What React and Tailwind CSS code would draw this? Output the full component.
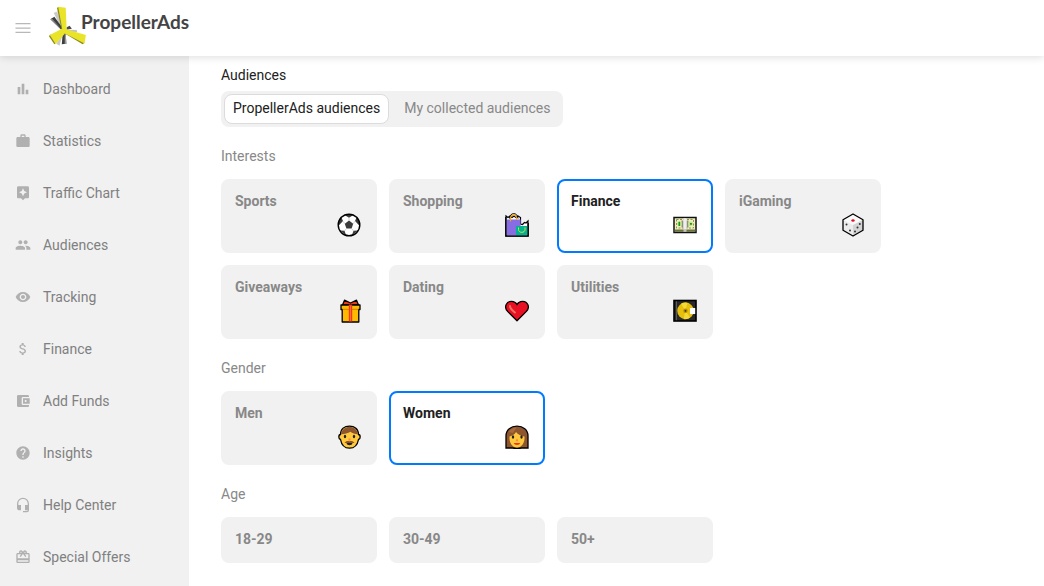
import { useState } from 'react';
import {
  MdBarChart, MdWork, MdAssistant, MdPeople, MdVisibility, MdAttachMoney,
  MdAccountBalanceWallet, MdHelp, MdHeadsetMic, MdCardGiftcard,
} from 'react-icons/md';

const NAV = [
  { label: 'Dashboard', icon: MdBarChart },
  { label: 'Statistics', icon: MdWork },
  { label: 'Traffic Chart', icon: MdAssistant },
  { label: 'Audiences', icon: MdPeople },
  { label: 'Tracking', icon: MdVisibility },
  { label: 'Finance', icon: MdAttachMoney },
  { label: 'Add Funds', icon: MdAccountBalanceWallet },
  { label: 'Insights', icon: MdHelp },
  { label: 'Help Center', icon: MdHeadsetMic },
  { label: 'Special Offers', icon: MdCardGiftcard },
];

const TABS = ['PropellerAds audiences', 'My collected audiences'];

const INTERESTS = [
  { label: 'Sports', icon: BallIcon },
  { label: 'Shopping', icon: BagsIcon },
  { label: 'Finance', icon: MoneyIcon },
  { label: 'iGaming', icon: DiceIcon },
  { label: 'Giveaways', icon: GiftIcon },
  { label: 'Dating', icon: HeartIcon },
  { label: 'Utilities', icon: DiscIcon },
];

const GENDERS = [
  { label: 'Men', icon: ManIcon },
  { label: 'Women', icon: WomanIcon },
];

const AGES = [{ label: '18-29' }, { label: '30-49' }, { label: '50+' }];

// ─── Icons ───────────────────────────────────────────────────────────────────

function Glyph({ children }) {
  return (
    <svg viewBox="0 0 24 24" className="m-0.5 size-6 self-end" aria-hidden="true">{children}</svg>
  );
}

function BallIcon() {
  return (
    <Glyph>
      <circle cx="12" cy="12" r="10.8" fill="#fff" />
      <path fill="#3b3b3b" d="M12 7.600 16.200 10.700 14.600 15.600H9.400L7.800 10.700Z" />
      <path fill="#3b3b3b" d="M7.200 1.700h9.600L12 4.800ZM1.200 9.200 4 3.500 6 8 1.300 13ZM22.800 9.200 20 3.500 18 8l4.700 5ZM2.800 17.600 7.500 17.800 9.200 22.600ZM21.200 17.600 16.500 17.800 14.800 22.600Z" />
      <path fill="none" stroke="#b5b5b5" strokeWidth=".6" d="M12 4.400v3.400M5.600 8 8 10.800M18.400 8 16 10.800M7.300 18.200l2.200-2.800M16.700 18.200l-2.200-2.800" />
      <circle cx="12" cy="12" r="10.8" fill="none" stroke="#000" strokeWidth="1.400" />
    </Glyph>
  );
}

function BagsIcon() {
  return (
    <Glyph>
      <path fill="#fff" stroke="#000" strokeWidth="1.200" d="M1 23V3l2 1.500L5 3l2 1.500L9 3l2 1.500L13 3l2.500 1.500V11l2 .5 2-2 1.500.500L23 8v15Z" />
      <path fill="#886ce4" d="M1.600 6.500h14V22.400h-14Z" />
      <path fill="#00b294" d="M11 13h11.400v9.400H11Z" />
      <path fill="none" stroke="#000" strokeWidth="1" d="M4.500 5.500c0-6.500 8.500-6.500 8.500 0" />
      <path fill="none" stroke="#f5a30a" strokeWidth="1.100" d="M5.500 8.500V5.500c0-4.500 6-4.500 6 0v1.500" />
      <path fill="none" stroke="#dfe02a" strokeWidth="1" d="M13.500 14.500v2c0 3.800 6.500 3.800 6.500 0v-2" />
      <path fill="none" stroke="#000" strokeWidth="1.300" d="M.8 4v19.200h22.400V10" />
    </Glyph>
  );
}

function MoneyIcon() {
  return (
    <Glyph>
      <rect x="1" y="4.500" width="22" height="15" fill="#eef0b8" stroke="#111" strokeWidth="1.500" />
      <path fill="#6b7144" d="M1.700 16.500h20.600v2.300H1.700Z" />
      <path fill="none" stroke="#8a8f68" strokeWidth="1" strokeDasharray="2 1.500" d="M3.500 6.500h17v8.500h-17Z" />
      <path fill="#8d8f80" d="M8.500 7.500h2v7h-2ZM13.500 7.500h2v7h-2Z" />
      <circle cx="6.500" cy="10.800" r="2.400" fill="#c8e08c" />
      <circle cx="17.500" cy="10.800" r="2.400" fill="#c8e08c" />
      <path fill="#159a1c" d="M5.500 8.700h1.600v4.200H5.500ZM17 9.900h1.900v1.900H17Z" />
      <path fill="#eeeeee" d="M10.500 5.200h3v11.300h-3Z" />
      <path fill="#c6c6c6" d="M10.500 16.500h3v2.300h-3Z" />
    </Glyph>
  );
}

function DiceIcon() {
  return (
    <Glyph>
      <path fill="#fafafa" d="M12 1 22 6.700v10.600L12 23 2 17.300V6.700Z" />
      <path fill="#ececec" d="M2 6.700 12 12v11L2 17.300Z" />
      <path fill="#d4d4d4" d="M22 6.700 12 12v11l10-5.700Z" />
      <path fill="none" stroke="#000" strokeWidth="1.300" strokeLinejoin="round" d="M12 1 22 6.700v10.600L12 23 2 17.300V6.700Z" />
      <ellipse cx="12" cy="7.500" rx="1.700" ry="1.200" fill="#e81123" />
      <g fill="#333">
        <circle cx="5.500" cy="11.500" r="1" /><circle cx="9" cy="17.500" r="1" />
        <circle cx="18.800" cy="11" r="1" /><circle cx="16.500" cy="14.500" r="1" />
        <circle cx="14" cy="18.500" r="1" />
      </g>
    </Glyph>
  );
}

function GiftIcon() {
  return (
    <Glyph>
      <path fill="#f03a17" stroke="#000" strokeWidth="1.300" strokeLinejoin="round" d="M5.500 6 7.500 1.200 13.500 4l6-2.800L21.500 6Z" />
      <path fill="#ffb900" stroke="#000" strokeWidth="1.300" strokeLinejoin="round" d="M4 6h19v4.500h-1.200V23H5.200V10.500H4Z" />
      <path fill="#d88b00" d="M5.800 9.800h15.400v1.200H5.800Z" />
      <path fill="#f03a17" d="M11.800 5.500h3.400v16.900h-3.400Z" />
      <path fill="#ff7259" d="M13 6.500h.8v15.500H13Z" />
    </Glyph>
  );
}

function HeartIcon() {
  return (
    <Glyph>
      <path fill="#e81123" stroke="#000" strokeWidth="1.300" strokeLinejoin="round" d="M12 21.800 2.600 12.400C-1.500 8 1.500 2.300 6.300 2.300c2.700 0 4.700 1.300 5.700 3.400 1-2.100 3-3.400 5.700-3.400 4.800 0 7.800 5.700 3.700 10.100Z" />
      <path fill="none" stroke="#f4705f" strokeWidth="2" strokeLinecap="round" d="M5 7c-.2 2.500 2.500 4.500 5 6.500" />
    </Glyph>
  );
}

function DiscIcon() {
  return (
    <Glyph>
      <rect x="1" y="1.500" width="22" height="20.500" fill="#292929" stroke="#000" strokeWidth="1.600" />
      <path stroke="#5b5b5b" strokeWidth="1" d="M3.500 2.300v18.900" />
      <circle cx="12.500" cy="11.800" r="8.300" fill="#e6c00c" />
      <path fill="#f5d936" d="M12.500 11.800 8 4.800a8.300 8.300 0 0 1 6.500-1.100ZM12.500 11.800 17 18.800a8.300 8.300 0 0 1-6.500 1.100Z" />
      <circle cx="12.500" cy="11.800" r="2.200" fill="#b58f00" />
      <circle cx="12.500" cy="11.800" r=".9" fill="#333" />
      <path fill="#fff" d="M17 9h5.200v6H17Z" />
    </Glyph>
  );
}

function ManIcon() {
  return (
    <Glyph>
      <path fill="#ffc83d" stroke="#000" strokeWidth="1.300" d="M3.500 9.500C3.500 4 7.500 1.200 12.500 1.200S21.500 4 21.500 9.500c2.200.2 2.200 4.500 0 5C20.500 20 17 23.200 12.500 23.200S4.500 20 3.500 14.500c-2.200-.5-2.200-4.800 0-5Z" />
      <path fill="#8e562e" d="M4.200 9.300C4.400 4.500 8 1.900 12.500 1.900s8.100 2.600 8.300 7.400c-2.500-.3-5.800-1.300-7.300-2.600-2.500 1.300-6 2.600-9.300 2.600Z" />
      <ellipse cx="8" cy="11.500" rx="1.200" ry="1.700" fill="#222" />
      <ellipse cx="17" cy="11.500" rx="1.200" ry="1.700" fill="#222" />
      <path fill="#ff8a3d" d="M11.500 13.500h2v2h-2Z" />
      <path fill="#8e562e" d="M7.500 18c1.500-2.400 3.300-2.200 5-1.800 1.700-.4 3.500-.6 5 1.800Z" />
      <path fill="#222" d="M9.500 18h6c-.5 3-5.500 3-6 0Z" />
    </Glyph>
  );
}

function WomanIcon() {
  return (
    <Glyph>
      <path fill="#8e562e" stroke="#000" strokeWidth="1.300" d="M1 23V11C1 4.500 6 1.200 12 1.200S23 4.500 23 11v12h-6.500c-3 .5-6 .5-9 0Z" />
      <path fill="#ffc83d" d="M4.500 11.500C7.500 11 10 9 11 7c2 2.500 5 4 8.500 4.500.5 6-2.500 11-7.500 11s-8-5-7.500-11Z" />
      <path fill="#a96b3c" d="M4 7C6 3.500 9 2.500 11.500 2.500L8 8Z" />
      <ellipse cx="8" cy="12" rx="1.200" ry="1.700" fill="#222" />
      <ellipse cx="16.500" cy="12" rx="1.200" ry="1.700" fill="#222" />
      <path fill="#ff8a3d" d="M11 14.200h2v2h-2Z" />
      <path fill="#f03a17" d="M8.800 18h6.400c-.6 2.600-5.800 2.600-6.400 0Z" />
    </Glyph>
  );
}

function PropellerMark() {
  return (
    <svg viewBox="147 15 117 123" className="h-10 w-[39px]" aria-hidden="true">
      <path fill="#c9c9c9" d="M163 36 179 31 194 84 187 85Z" />
      <path fill="#e4e4e4" d="M172 33 179 31 192 72Z" />
      <path fill="#3d3d3d" d="M153 56 165 48 193 86 186 88Z" />
      <path fill="#8a8a8a" d="M153 56 157 53 188 87Z" />
      <path fill="#4a4a4a" d="M203 80 212 76 219 85 202 88Z" />
      <path fill="#c2c2c2" d="M202 88 234 89 235 95 204 94Z" />
      <path fill="#3d3d3d" d="M191 96 200 96 202 131 188 133Z" />
      <path fill="#9a9a9a" d="M197 98 200 96 202 131 197 132Z" />
      <path fill="#c9c9c9" d="M190 104 181 137 171 131Z" />
      <path fill="#8b8b1c" d="M173 20 187 86 193 88 180 18Z" />
      <path fill="#e9e32a" d="M177 17 200 20 203 87 190 89Z" />
      <path fill="#8b8b1c" d="M148 107 165 133 170 129 154 103Z" />
      <path fill="#e9e32a" d="M151 104 193 83 200 97 169 132Z" />
      <path fill="#8b8b1c" d="M196 99 252 133 258 128 200 94Z" />
      <path fill="#e9e32a" d="M193 84 262 104 258 130 196 99Z" />
    </svg>
  );
}

// ─── Layout ──────────────────────────────────────────────────────────────────

function Header() {
  return (
    <header className="relative z-10 flex h-14 shrink-0 items-center bg-white pl-[15px] shadow-[0_1px_8px_rgba(0,0,0,0.14)]">
      <button type="button" aria-label="Toggle menu" className="text-[#b8b8b8]">
        <svg viewBox="0 0 16 10" className="h-2.5 w-4" fill="currentColor" aria-hidden="true">
          <path d="M.5 0h15v1.300H.5ZM.5 4.500h15v1.300H.5ZM.5 8.700h15V10H.5Z" />
        </svg>
      </button>
      <a href="#home" className="ml-[17px] flex items-start pb-1">
        <PropellerMark />
        <span className="-ml-1.5 pt-1 font-['Lato',sans-serif] text-[19px] leading-6 font-bold text-[#444]">PropellerAds</span>
      </a>
    </header>
  );
}

function Sidebar() {
  return (
    <nav className="w-[189px] shrink-0 bg-[#f1f1f1] pt-[7px]">
      <ul>
        {NAV.map(({ label, icon: Icon }) => (
          <li key={label}>
            <a href="#nav" className="flex h-[52px] items-center gap-3 pl-[15px] text-sm text-[#808080]">
              <Icon className="size-4 text-[#b0b0b0]" />
              {label}
            </a>
          </li>
        ))}
      </ul>
    </nav>
  );
}

function OptionCard({ label, icon: Icon, selected, onClick }) {
  return (
    <button
      type="button"
      aria-pressed={selected}
      onClick={onClick}
      className={`flex w-[156px] flex-col rounded-lg border-2 px-3 pt-2.5 pb-3 text-left text-sm font-bold ${
        selected ? 'border-[#007aff] bg-white text-[#212121]' : 'border-[#f1f1f1] bg-[#f1f1f1] text-[#888]'
      }`}
    >
      <span className="leading-5">{label}</span>
      {Icon && <Icon />}
    </button>
  );
}

function OptionGroup({ title, options, initial }) {
  const [picked, setPicked] = useState(initial);
  return (
    <section className="mt-[19px]">
      <h3 className="mb-[13px] text-sm text-[#888]">{title}</h3>
      <div className="flex max-w-[660px] flex-wrap gap-3">
        {options.map(o => (
          <OptionCard
            key={o.label}
            {...o}
            selected={picked === o.label}
            onClick={() => setPicked(picked === o.label ? null : o.label)}
          />
        ))}
      </div>
    </section>
  );
}

function AudienceTabs() {
  const [tab, setTab] = useState(TABS[0]);
  return (
    <div className="mt-1.5 flex h-9 w-fit gap-1.5 rounded-lg bg-[#f1f1f1] p-[3px]">
      {TABS.map(t => (
        <button
          key={t}
          type="button"
          aria-pressed={tab === t}
          onClick={() => setTab(t)}
          className={`rounded-lg border px-2 pb-0.5 text-sm ${
            tab === t ? 'border-[#dcdcdc] bg-white text-[#212121]' : 'border-transparent text-[#888]'
          }`}
        >
          {t}
        </button>
      ))}
    </div>
  );
}

export default function App() {
  return (
    <div className="flex h-screen flex-col overflow-hidden bg-white font-['Roboto',sans-serif]">
      <Header />
      <div className="flex min-h-0 flex-1">
        <Sidebar />
        <main className="flex-1 overflow-y-auto px-8 pt-[9px]">
          <h2 className="text-sm text-[#212121]">Audiences</h2>
          <AudienceTabs />
          <OptionGroup title="Interests" options={INTERESTS} initial="Finance" />
          <OptionGroup title="Gender" options={GENDERS} initial="Women" />
          <OptionGroup title="Age" options={AGES} initial={null} />
        </main>
      </div>
    </div>
  );
}
